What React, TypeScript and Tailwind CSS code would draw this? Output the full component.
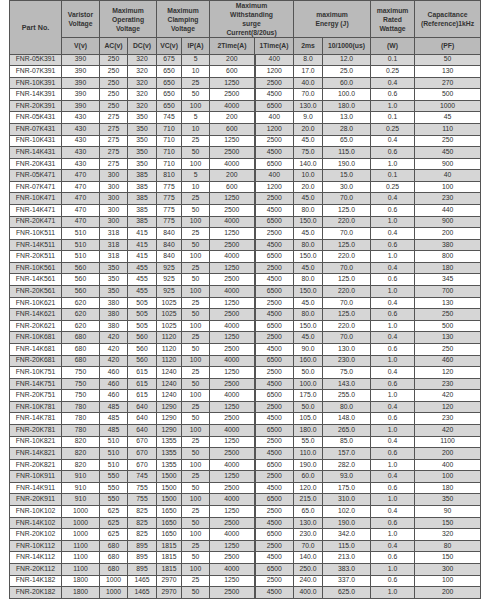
const rows: string[][] = [
  ["FNR-05K391", "390", "250", "320", "675", "5", "200", "400", "8.0", "12.0", "0.1", "50"],
  ["FNR-07K391", "390", "250", "320", "650", "10", "600", "1200", "17.0", "25.0", "0.25", "130"],
  ["FNR-10K391", "390", "250", "320", "650", "25", "1250", "2500", "40.0", "60.0", "0.4", "270"],
  ["FNR-14K391", "390", "250", "320", "650", "50", "2500", "4500", "70.0", "100.0", "0.6", "500"],
  ["FNR-20K391", "390", "250", "320", "650", "100", "4000", "6500", "130.0", "180.0", "1.0", "1000"],
  ["FNR-05K431", "430", "275", "350", "745", "5", "200", "400", "9.0", "13.0", "0.1", "45"],
  ["FNR-07K431", "430", "275", "350", "710", "10", "600", "1200", "20.0", "28.0", "0.25", "110"],
  ["FNR-10K431", "430", "275", "350", "710", "25", "1250", "2500", "45.0", "65.0", "0.4", "250"],
  ["FNR-14K431", "430", "275", "350", "710", "50", "2500", "4500", "75.0", "115.0", "0.6", "450"],
  ["FNR-20K431", "430", "275", "350", "710", "100", "4000", "6500", "140.0", "190.0", "1.0", "900"],
  ["FNR-05K471", "470", "300", "385", "810", "5", "200", "400", "10.0", "15.0", "0.1", "40"],
  ["FNR-07K471", "470", "300", "385", "775", "10", "600", "1200", "20.0", "30.0", "0.25", "100"],
  ["FNR-10K471", "470", "300", "385", "775", "25", "1250", "2500", "45.0", "70.0", "0.4", "230"],
  ["FNR-14K471", "470", "300", "385", "775", "50", "2500", "4500", "80.0", "125.0", "0.6", "440"],
  ["FNR-20K471", "470", "300", "385", "775", "100", "4000", "6500", "150.0", "220.0", "1.0", "900"],
  ["FNR-10K511", "510", "318", "415", "840", "25", "1250", "2500", "45.0", "70.0", "0.4", "200"],
  ["FNR-14K511", "510", "318", "415", "840", "50", "2500", "4500", "80.0", "125.0", "0.6", "380"],
  ["FNR-20K511", "510", "318", "415", "840", "100", "4000", "6500", "150.0", "220.0", "1.0", "800"],
  ["FNR-10K561", "560", "350", "455", "925", "25", "1250", "2500", "45.0", "70.0", "0.4", "180"],
  ["FNR-14K561", "560", "350", "455", "925", "50", "2500", "4500", "80.0", "125.0", "0.6", "345"],
  ["FNR-20K561", "560", "350", "455", "925", "100", "4000", "6500", "150.0", "220.0", "1.0", "700"],
  ["FNR-10K621", "620", "380", "505", "1025", "25", "1250", "2500", "45.0", "70.0", "0.4", "130"],
  ["FNR-14K621", "620", "380", "505", "1025", "50", "2500", "4500", "80.0", "125.0", "0.6", "250"],
  ["FNR-20K621", "620", "380", "505", "1025", "100", "4000", "6500", "150.0", "220.0", "1.0", "500"],
  ["FNR-10K681", "680", "420", "560", "1120", "25", "1250", "2500", "45.0", "70.0", "0.4", "130"],
  ["FNR-14K681", "680", "420", "560", "1120", "50", "2500", "4500", "90.0", "130.0", "0.6", "250"],
  ["FNR-20K681", "680", "420", "560", "1120", "100", "4000", "6500", "160.0", "230.0", "1.0", "460"],
  ["FNR-10K751", "750", "460", "615", "1240", "25", "1250", "2500", "50.0", "75.0", "0.4", "120"],
  ["FNR-14K751", "750", "460", "615", "1240", "50", "2500", "4500", "100.0", "143.0", "0.6", "230"],
  ["FNR-20K751", "750", "460", "615", "1240", "100", "4000", "6500", "175.0", "255.0", "1.0", "420"],
  ["FNR-10K781", "780", "485", "640", "1290", "25", "1250", "2500", "50.0", "80.0", "0.4", "120"],
  ["FNR-14K781", "780", "485", "640", "1290", "50", "2500", "4500", "105.0", "148.0", "0.6", "230"],
  ["FNR-20K781", "780", "485", "640", "1290", "100", "4000", "6500", "180.0", "265.0", "1.0", "420"],
  ["FNR-10K821", "820", "510", "670", "1355", "25", "1250", "2500", "55.0", "85.0", "0.4", "1100"],
  ["FNR-14K821", "820", "510", "670", "1355", "50", "2500", "4500", "110.0", "157.0", "0.6", "200"],
  ["FNR-20K821", "820", "510", "670", "1355", "100", "4000", "6500", "190.0", "282.0", "1.0", "400"],
  ["FNR-10K911", "910", "550", "745", "1500", "25", "1250", "2500", "60.0", "93.0", "0.4", "100"],
  ["FNR-14K911", "910", "550", "755", "1500", "50", "2500", "4500", "120.0", "175.0", "0.6", "180"],
  ["FNR-20K911", "910", "550", "755", "1500", "100", "4000", "6500", "215.0", "310.0", "1.0", "350"],
  ["FNR-10K102", "1000", "625", "825", "1650", "25", "1250", "2500", "65.0", "102.0", "0.4", "90"],
  ["FNR-14K102", "1000", "625", "825", "1650", "50", "2500", "4500", "130.0", "190.0", "0.6", "150"],
  ["FNR-20K102", "1000", "625", "825", "1650", "100", "4000", "6500", "230.0", "342.0", "1.0", "320"],
  ["FNR-10K112", "1100", "680", "895", "1815", "25", "1250", "2500", "70.0", "115.0", "0.4", "80"],
  ["FNR-14K112", "1100", "680", "895", "1815", "50", "2500", "4500", "140.0", "213.0", "0.6", "150"],
  ["FNR-20K112", "1100", "680", "895", "1815", "100", "4000", "6500", "250.0", "383.0", "1.0", "300"],
  ["FNR-14K182", "1800", "1000", "1465", "2970", "25", "1250", "2500", "240.0", "337.0", "0.6", "100"],
  ["FNR-20K182", "1800", "1000", "1465", "2970", "50", "2500", "4500", "400.0", "625.0", "1.0", "200"],
];

// column widths measured off the sheet
const widths = [52, 38, 28, 29, 25, 28, 45, 39, 29, 48, 44, 66];

const units = ["V(v)", "AC(v)", "DC(v)", "VC(v)", "IP(A)", "2Time(A)", "1Time(A)", "2ms", "10/1000(us)", "(W)", "(PF)"];

const th = "border border-[#555] p-0 text-center align-middle font-bold leading-[9px]";

export default function App() {
  return (
    <div className="min-h-[600px] w-[489px] bg-white font-['Liberation_Sans',Arial,sans-serif] text-[#2e2e2e]">
      <table className="ml-[9px] w-[471px] table-fixed border-collapse text-[6.8px]">
        <colgroup>
          {widths.map((w, i) => (
            <col key={i} style={{ width: w }} />
          ))}
        </colgroup>
        <thead className="bg-[#bababa] text-[#333]">
          <tr className="h-[37px]">
            <th rowSpan={2} className={`${th} text-[7.2px]`}>
              Part No.
            </th>
            <th className={th}>
              Varistor
              <br />
              Voltage
            </th>
            <th colSpan={2} className={th}>
              Maximum
              <br />
              Operating
              <br />
              Voltage
            </th>
            <th colSpan={2} className={th}>
              Maximum
              <br />
              Clamping
              <br />
              Voltage
            </th>
            <th colSpan={2} className={th}>
              Maximum
              <br />
              Withstanding
              <br />
              surge
              <br />
              Current(8/20us)
            </th>
            <th colSpan={2} className={`${th} font-normal`}>
              <span className="font-bold">
                maximum
                <br />
                Energy (J)
              </span>
            </th>
            <th className={th}>
              maximum
              <br />
              Rated
              <br />
              Wattage
            </th>
            <th className={th}>
              Capacitance
              <br />
              (Reference)1kHz
            </th>
          </tr>
          <tr className="h-[16.5px]">
            {units.map((u) => (
              <th key={u} className={th}>
                {u}
              </th>
            ))}
          </tr>
        </thead>
        <tbody>
          {rows.map((r, i) => (
            <tr key={r[0]} className={`h-[11.58px] ${i % 2 === 0 ? "bg-[#d6d6d6]" : "bg-white"}`}>
              {r.map((v, j) => (
                <td
                  key={j}
                  className={`border border-[#555] p-0 text-center align-middle leading-none ${j === 7 ? "border-l-2" : ""}`}
                >
                  {v}
                </td>
              ))}
            </tr>
          ))}
        </tbody>
      </table>
    </div>
  );
}
